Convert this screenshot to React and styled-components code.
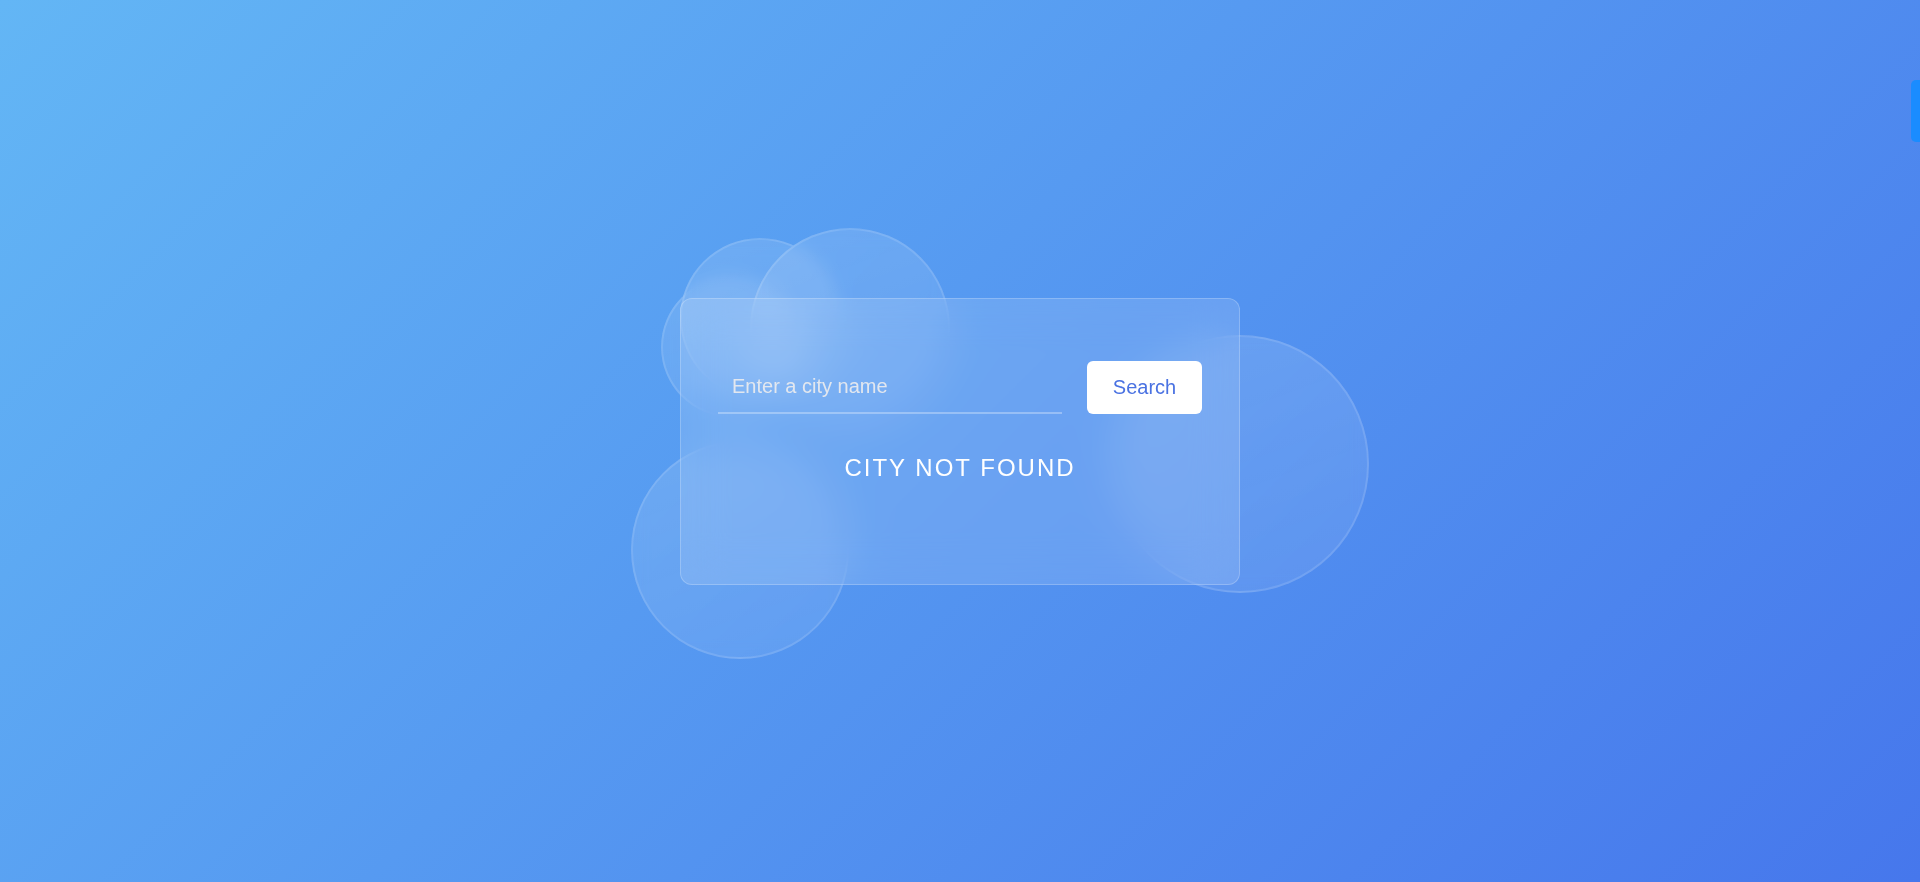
import React from "react";
import styled, { createGlobalStyle } from "styled-components";

const GlobalStyle = createGlobalStyle`
  html, body {
    margin: 0;
    padding: 0;
  }
  body {
    font-family: "Liberation Sans", Arial, sans-serif;
  }
`;

const Page = styled.div`
  min-height: 100vh;
  display: flex;
  align-items: center;
  justify-content: center;
  overflow: hidden;
  background: linear-gradient(135deg, #63b6f5 0%, #4677ec 100%);
`;

const Stage = styled.div`
  position: relative;
`;

// decorative bubbles floating behind the glass card
const Bubble = styled.div`
  position: absolute;
  left: ${(p) => p.x}px;
  top: ${(p) => p.y}px;
  width: ${(p) => p.size}px;
  height: ${(p) => p.size}px;
  border-radius: 50%;
  background: linear-gradient(
    160deg,
    rgba(255, 255, 255, 0.13),
    rgba(255, 255, 255, 0.08)
  );
  border: 2px solid rgba(255, 255, 255, 0.12);
  box-sizing: border-box;
  backdrop-filter: blur(8px);
  -webkit-backdrop-filter: blur(8px);
`;

const Card = styled.div`
  position: relative;
  z-index: 1;
  width: 560px;
  height: 287px;
  box-sizing: border-box;
  padding: 62px 37px 0;
  border-radius: 12px;
  background: rgba(255, 255, 255, 0.13);
  border: 1px solid rgba(255, 255, 255, 0.22);
  backdrop-filter: blur(22px);
  -webkit-backdrop-filter: blur(22px);
`;

const SearchRow = styled.div`
  display: flex;
  gap: 25px;
`;

const CityInput = styled.input`
  flex: 1;
  min-width: 0;
  height: 53px;
  box-sizing: border-box;
  padding: 0 14px;
  background: transparent;
  border: none;
  border-bottom: 2px solid rgba(255, 255, 255, 0.3);
  outline: none;
  font-family: inherit;
  font-size: 20px;
  color: #fff;

  &::placeholder {
    color: rgba(232, 234, 238, 0.95);
  }
`;

const SearchButton = styled.button`
  width: 115px;
  height: 53px;
  border: none;
  border-radius: 6px;
  background: #fff;
  color: #4a72e2;
  font-family: inherit;
  font-size: 20px;
  cursor: pointer;
`;

const Message = styled.h2`
  margin: 40px 0 0;
  text-align: center;
  font-size: 24px;
  font-weight: 400;
  letter-spacing: 2px;
  text-transform: uppercase;
  color: #fff;
`;

const SideTab = styled.div`
  position: fixed;
  top: 80px;
  right: 0;
  width: 9px;
  height: 62px;
  border-radius: 5px 0 0 5px;
  background: #1a8cff;
`;

const bubbles = [
  { x: -19, y: -21, size: 140 },
  { x: 0, y: -60, size: 160 },
  { x: 70, y: -70, size: 200 },
  { x: -49, y: 143, size: 218 },
  { x: 431, y: 37, size: 258 },
];

const App = () => (
  <Page>
    <GlobalStyle />
    <Stage>
      {bubbles.map((b, i) => (
        <Bubble key={i} x={b.x} y={b.y} size={b.size} />
      ))}
      <Card>
        <SearchRow>
          <CityInput type="text" placeholder="Enter a city name" />
          <SearchButton>Search</SearchButton>
        </SearchRow>
        <Message>City not found</Message>
      </Card>
    </Stage>
    <SideTab />
  </Page>
);

export default App;
